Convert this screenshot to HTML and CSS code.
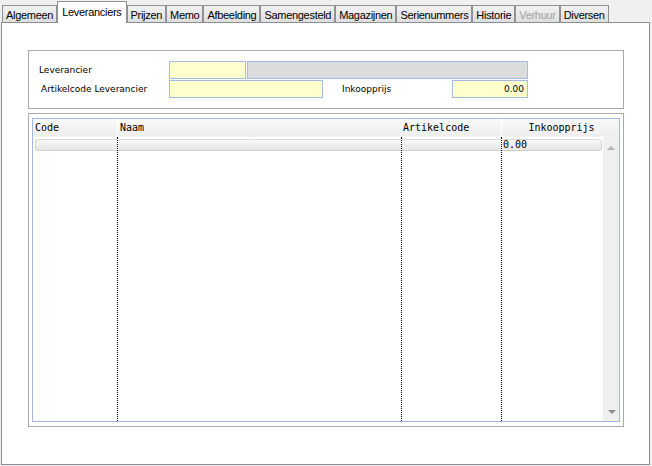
FILE: index.html
```html
<!DOCTYPE html>
<html>
<head>
<meta charset="utf-8">
<link rel="stylesheet" href="styles.css">
</head>
<body>
<div class="tabs">
  <div class="tab">Algemeen</div>
  <div class="tab active">Leveranciers</div>
  <div class="tab">Prijzen</div>
  <div class="tab">Memo</div>
  <div class="tab">Afbeelding</div>
  <div class="tab">Samengesteld</div>
  <div class="tab">Magazijnen</div>
  <div class="tab">Serienummers</div>
  <div class="tab">Historie</div>
  <div class="tab disabled">Verhuur</div>
  <div class="tab">Diversen</div>
</div>
<div class="panel">
  <div class="group form">
    <div class="row">
      <span class="label">Leverancier</span>
      <span class="input yellow w-code"></span>
      <span class="input grey w-name"></span>
    </div>
    <div class="row">
      <span class="label label-2">Artikelcode Leverancier</span>
      <span class="input yellow w-art"></span>
      <span class="label-price">Inkoopprijs</span>
      <span class="input yellow w-price num">0.00</span>
    </div>
  </div>
  <div class="group gridbox">
    <div class="grid">
      <div class="ghead">
        <div class="hc c1">Code</div>
        <div class="hc c2">Naam</div>
        <div class="hc c3">Artikelcode</div>
        <div class="hc c4h">Inkoopprijs</div>
      </div>
      <div class="gbody">
        <div class="col c1"><div class="cell first"></div></div>
        <div class="col c2"><div class="cell"></div></div>
        <div class="col c3"><div class="cell"></div></div>
        <div class="col c4 last"><div class="cell lastcell">0.00</div></div>
        <div class="scroll">
          <span class="arrow up"></span>
          <span class="arrow down"></span>
        </div>
      </div>
    </div>
  </div>
</div>
</body>
</html>
```
FILE: styles.css
```css
html, body {
  margin: 0;
  padding: 0;
  background: #f0f0f0;
}
body {
  width: 652px;
  height: 466px;
  overflow: hidden;
}
.tabs {
  display: flex;
  align-items: flex-end;
  height: 22px;
  padding-left: 2px;
  box-sizing: border-box;
}
.tab {
  box-sizing: border-box;
  height: 17px;
  border: 1px solid #919191;
  border-bottom: none;
  background: linear-gradient(#f2f2f2, #dedede);
  font-family: "Liberation Sans", Arial, sans-serif;
  font-size: 11px;
  letter-spacing: -0.3px;
  line-height: 14px;
  padding: 2px 3px 0 3px;
  color: #000;
  white-space: nowrap;
}
.tab.active {
  position: relative;
  z-index: 1;
  height: 22px;
  margin-bottom: -1px;
  background: #fff;
  padding: 3px 4px 0 4px;
}
.tab.disabled {
  color: #a3a3a3;
}
.panel {
  box-sizing: border-box;
  margin-left: 1px;
  width: 649px;
  height: 443px;
  border: 1px solid #8b8e96;
  background: #fff;
  padding: 27px 0 0 26px;
}
.group {
  box-sizing: border-box;
  width: 596px;
  border: 1px solid #a9a9a9;
}
.form {
  height: 59px;
  padding: 10px 0 0 10px;
  display: flex;
  flex-direction: column;
  gap: 1px;
}
.row {
  display: flex;
  align-items: center;
  height: 18px;
}
.label {
  width: 130px;
  font-family: "DejaVu Sans", sans-serif;
  font-size: 9px;
  color: #000;
}
.label-2 {
  padding-left: 2px;
  width: 128px;
}
.label-price {
  width: 110px;
  font-family: "DejaVu Sans", sans-serif;
  font-size: 9px;
}
.input {
  box-sizing: border-box;
  height: 18px;
  border: 1px solid #a3bbe6;
  display: block;
}
.yellow { background: #ffffcc; }
.grey { background: #dcdcdc; }
.w-code { width: 77px; margin-right: 1px; }
.w-name { width: 281px; }
.w-art { width: 154px; margin-right: 19px; }
.w-price { width: 76px; }
.num {
  font-family: "DejaVu Sans", sans-serif;
  font-size: 9px;
  text-align: right;
  padding-right: 3px;
  line-height: 16px;
}
.gridbox {
  margin-top: 4px;
  height: 314px;
  padding: 4px 3px 4px 3px;
}
.grid {
  box-sizing: border-box;
  width: 588px;
  height: 304px;
  border: 1px solid #a7b6de;
  display: flex;
  flex-direction: column;
  font-family: "DejaVu Sans Mono", monospace;
  font-size: 10px;
  color: #000;
}
.ghead {
  display: flex;
  height: 18px;
  background: linear-gradient(#f9f9f9, #eeeeee);
  border-bottom: 1px solid #f4f4f4;
  box-sizing: border-box;
}
.hc {
  box-sizing: border-box;
  line-height: 18px;
  border-right: 1px solid #ffffff;
  white-space: nowrap;
}
.hc.c1 { width: 85px; padding-left: 2px; }
.hc.c2 { width: 284px; padding-left: 2px; }
.hc.c3 { width: 100px; padding-left: 1px; }
.hc.c4h { width: 117px; text-align: center; border-right: none; padding-left: 2px; }
.gbody {
  flex: 1;
  display: flex;
}
.col {
  box-sizing: border-box;
  padding-top: 2px;
  border-right: 1px dotted #000;
}
.col.c1 { width: 85px; padding-left: 2px; }
.col.c2 { width: 284px; }
.col.c3 { width: 100px; }
.col.c4 { width: 101px; border-right: none; padding-right: 1px; }
.cell {
  height: 12px;
  box-sizing: border-box;
  background: linear-gradient(#f8f8f8, #e6e6e6);
  border-top: 1px solid #dadada;
  border-bottom: 1px solid #d2d2d2;
  line-height: 10px;
}
.cell.first {
  border-left: 1px solid #d2d2d2;
  border-radius: 3px 0 0 3px;
}
.cell.lastcell {
  border-right: 1px solid #d2d2d2;
  border-radius: 0 3px 3px 0;
  padding-left: 1px;
}
.scroll {
  width: 16px;
  background: #efefef;
  display: flex;
  flex-direction: column;
  justify-content: space-between;
  align-items: center;
  padding: 9px 0 7px 0;
  box-sizing: border-box;
}
.arrow {
  width: 0;
  height: 0;
  border-left: 4px solid transparent;
  border-right: 4px solid transparent;
}
.arrow.up {
  border-bottom: 4px solid #b4b4b4;
}
.arrow.down {
  border-top: 4px solid #8e8e8e;
  margin-left: 2px;
}
```
